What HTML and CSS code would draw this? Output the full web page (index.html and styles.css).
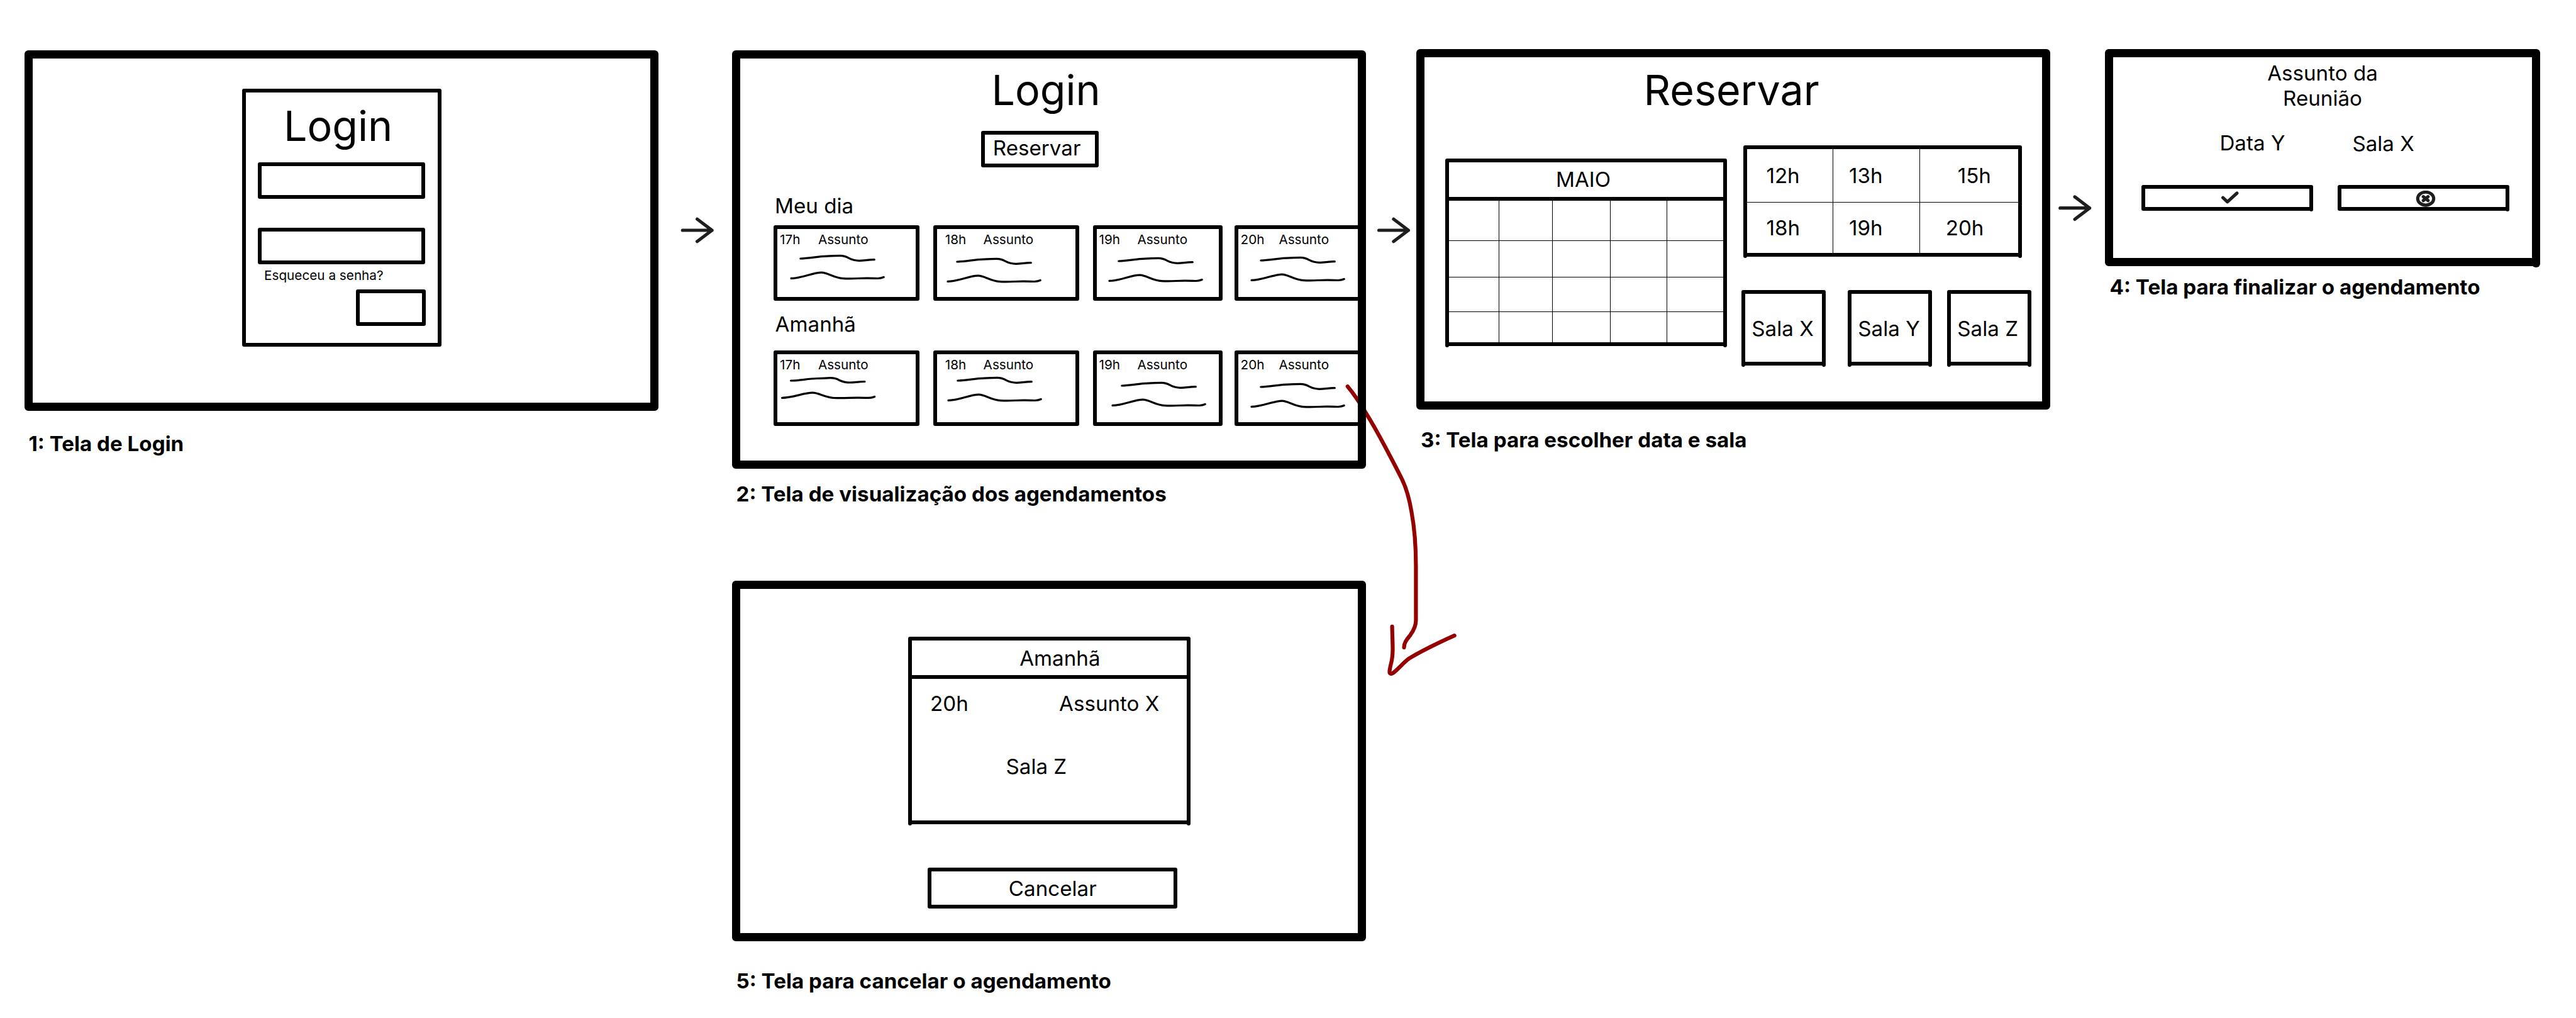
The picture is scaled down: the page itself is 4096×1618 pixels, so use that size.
FILE: index.html
```html
<!DOCTYPE html>
<html lang="pt-BR">
<head>
<meta charset="utf-8">
<title>Fluxo de agendamento de salas</title>
<link rel="stylesheet" href="styles.css">
</head>
<body>
<main class="board">
  <svg class="ink" width="4096" height="1618" viewBox="0 0 4096 1618">
    <defs>
      <g id="arrow"><path d="M0 0H46.8M23.3 -17.8L46.8 0L23.3 17.8"/></g>
    </defs>
    <g class="connector">
      <use href="#arrow" x="1085.3" y="366"/>
      <use href="#arrow" x="2192.6" y="366"/>
      <use href="#arrow" x="3275.8" y="330.7"/>
    </g>
    <g class="marker">
      <path d="M2142.8 614.2C2152 625 2162 640 2171.6 655.8C2183 674 2194 694 2204.4 713.7C2213 730 2221 745 2228.6 760.4C2236 775 2241 793 2244.5 813.9C2249.5 841 2251.4 870 2251.4 900V985.9C2251.4 995 2247 1003 2242.5 1009.3C2237 1016.5 2232.5 1021 2232.5 1029.1"/>
      <path d="M2213.6 995.8C2213.8 1010 2214.5 1021 2214.5 1031.7C2214.5 1040 2213.5 1049 2211.5 1056C2209.5 1065 2208 1070.9 2211.9 1070.9C2217 1070.9 2231 1053 2240.8 1046.4C2259 1035.5 2284 1023 2312.6 1010.1"/>
    </g>
    <defs>
      <path id="notes" d="M14.8 0C28 0 42 -3.5 57 -3.8C65 -3.8 71 -4.7 77.7 -4.7C85 -4.7 88 -3 91.5 -0.9C96 1.5 100 3.3 108.3 3.3C116 3.3 122 1.7 132.3 1.7M0 31.4C17 31.4 34 22.2 48.4 22.2C58 22.2 68 31.1 83 31.6C98 32.4 108 31.1 121 31.2C130 31.2 134 31.6 138 31.5C142 31.3 145 30.4 147.2 29.5"/>
      <path id="notes-tight" d="M13.5 0C27 0 41 -3.3 55.7 -3.5C64 -3.5 70 -4.3 76.4 -4.3C84 -4.3 87 -2.8 90.2 -0.8C95 1.4 99 3 107 3C115 3 121 1.5 131 1.5M-0.5 27.3C17 27.3 34 19.2 48 19.2C58 19.2 68 27 82.500 27.5C98 28.2 108 27 120.500 27.1C130 27.1 134 27.5 137.500 27.4C142 27.2 144.500 26.4 146.700 25.5"/>
    </defs>
  </svg>

  <section class="screen screen-login">
    <form class="box login-form">
      <h1 class="title">Login</h1>
      <div class="box field"></div>
      <div class="box field second"></div>
      <p class="small forgot">Esqueceu a senha?</p>
      <div class="box submit"></div>
    </form>
  </section>
  <p class="caption cap-1">1: Tela de Login</p>

  <section class="screen screen-agenda">
    <h1 class="title">Login</h1>
    <div class="box reserve">Reservar</div>
    <p class="day">Meu dia</p>
    <div class="cards">
      <article class="box card a1"><p class="small head"><span class="hour">17h</span>Assunto</p><svg class="scribble" viewBox="0 0 148 33"><use href="#notes"/></svg></article>
      <article class="box card a2"><p class="small head"><span class="hour">18h</span>Assunto</p><svg class="scribble" viewBox="0 0 148 33"><use href="#notes"/></svg></article>
      <article class="box card a3"><p class="small head"><span class="hour">19h</span>Assunto</p><svg class="scribble" viewBox="0 0 148 33"><use href="#notes"/></svg></article>
      <article class="box card a4"><p class="small head"><span class="hour">20h</span>Assunto</p><svg class="scribble" viewBox="0 0 148 33"><use href="#notes"/></svg></article>
    </div>
    <p class="day tomorrow">Amanhã</p>
    <div class="cards later">
      <article class="box card a1"><p class="small head"><span class="hour">17h</span>Assunto</p><svg class="scribble" viewBox="0 0 148 33"><use href="#notes-tight"/></svg></article>
      <article class="box card a2"><p class="small head"><span class="hour">18h</span>Assunto</p><svg class="scribble" viewBox="0 0 148 33"><use href="#notes"/></svg></article>
      <article class="box card a3"><p class="small head"><span class="hour">19h</span>Assunto</p><svg class="scribble" viewBox="0 0 148 33"><use href="#notes"/></svg></article>
      <article class="box card a4"><p class="small head"><span class="hour">20h</span>Assunto</p><svg class="scribble" viewBox="0 0 148 33"><use href="#notes"/></svg></article>
    </div>
  </section>
  <p class="caption cap-2">2: Tela de visualização dos agendamentos</p>

  <section class="screen screen-reserve">
    <h1 class="title">Reservar</h1>
    <div class="picker">
      <div class="box legs calendar">
        <p class="month">MAIO</p>
        <div class="days">
          <i></i><i></i><i></i><i></i><i></i>
          <i></i><i></i><i></i><i></i><i></i>
          <i></i><i></i><i></i><i></i><i></i>
          <i></i><i></i><i></i><i></i><i></i>
        </div>
      </div>
      <div class="choices">
        <div class="box legs times">
          <p>12h</p><p>13h</p><p class="t15">15h</p>
          <p>18h</p><p>19h</p><p class="t20">20h</p>
        </div>
        <div class="rooms">
          <div class="box legs room">Sala X</div>
          <div class="box legs room room-y">Sala Y</div>
          <div class="box legs room room-z">Sala Z</div>
        </div>
      </div>
    </div>
  </section>
  <p class="caption cap-3">3: Tela para escolher data e sala</p>

  <section class="screen leg screen-finish">
    <p class="subject">Assunto da<br>Reunião</p>
    <div class="summary"><p class="date">Data Y</p><p class="place">Sala X</p></div>
    <div class="actions">
      <div class="box leg action"><svg class="icon check" width="30" height="20" viewBox="0 0 30 20"><path d="M3.6 10.2L10.7 16.8L25.9 3"/></svg></div>
      <div class="box leg action"><svg class="icon cross" width="32" height="25.4" viewBox="-16 -12.7 32 25.4"><ellipse rx="12.7" ry="10.4"/><path d="M-3.8 -3.1L3.8 3.1M3.8 -3.1L-3.8 3.1"/></svg></div>
    </div>
  </section>
  <p class="caption cap-4">4: Tela para finalizar o agendamento</p>

  <section class="screen screen-cancel">
    <div class="box legs booking">
      <p class="booking-day">Amanhã</p>
      <div class="booking-row"><p class="when">20h</p><p>Assunto X</p></div>
      <p class="where">Sala Z</p>
    </div>
    <div class="box cancel">Cancelar</div>
  </section>
  <p class="caption cap-5">5: Tela para cancelar o agendamento</p>
</main>
</body>
</html>
```
FILE: styles.css
```css
* { box-sizing: border-box; margin: 0; padding: 0; }

body { background: #fff; }

.board {
  position: relative;
  width: 4096px;
  height: 1618px;
  overflow: hidden;
  color: #000;
  font: 400 33.17px/40px Inter, "Liberation Sans", sans-serif;
  white-space: nowrap;
}

/* hand-drawn layer, lies under the screen frames */
.ink { position: absolute; left: 0; top: 0; }
.connector, .marker { fill: none; stroke-linecap: round; stroke-linejoin: round; }
.connector { stroke: #1e1e1e; stroke-width: 5.2; }
.marker { stroke: #950000; stroke-width: 6.2; }

/* screens are windows on a free canvas */
.screen {
  position: absolute;
  display: flex;
  flex-direction: column;
  align-items: flex-start;
  border: 13px solid #000;
  border-radius: 6px;
}
.screen-login { left: 39px; top: 80px; width: 1008px; height: 573px; }
.screen-agenda { left: 1164px; top: 80px; width: 1008px; height: 665px; overflow: hidden; }
.screen-reserve { left: 2252px; top: 78px; width: 1008px; height: 573px; }
.screen-finish { left: 3347px; top: 78px; width: 692px; height: 345px; }
.screen-cancel { left: 1164px; top: 923px; width: 1008px; height: 573px; }

.caption { position: absolute; font-weight: 700; }
.cap-1 { left: 45.5px; top: 685px; }
.cap-2 { left: 1170.5px; top: 765px; }
.cap-3 { left: 2259px; top: 679px; }
.cap-4 { left: 3354.5px; top: 435.6px; }
.cap-5 { left: 1170.5px; top: 1539px; }

.title { font-size: 66.34px; line-height: 80px; font-weight: 400; }
.small { font-size: 20.73px; line-height: 24px; }

.box { position: relative; border: 6px solid #000; border-radius: 3px; }
/* side strokes that run slightly past the bottom one */
.legs::before, .legs::after, .leg::after {
  content: "";
  position: absolute;
  bottom: -8px;
  width: 6px;
  height: 6px;
  border-radius: 3px;
  background: #000;
}
.legs::before { left: -6px; }
.legs::after, .leg::after { right: -6px; }
.leg::after { bottom: -7px; }
.screen.leg::after { right: -13px; bottom: -15px; width: 13px; height: 13px; border-radius: 6px; }

/* 1: login */
.login-form {
  display: flex;
  flex-direction: column;
  align-self: center;
  width: 317px;
  height: 410px;
  margin-top: 48px;
}
.login-form .title { margin: 13px 0 0 60.5px; }
.field { width: 266px; height: 58px; margin: 18px 0 0 19px; }
.field.second { margin-top: 46px; }
.forgot { margin: 6.4px 0 0 29.5px; }
.submit { width: 111px; height: 58px; margin: 9.6px 19px 0 auto; }

/* 2: agenda */
.screen-agenda .title { margin: 9.8px 0 0 399.5px; }
.reserve { width: 187px; height: 58px; margin: 25.2px 0 0 383px; padding: 1px 0 0 12.8px; }
.day { margin: 40.6px 0 0 55px; }
.day.tomorrow { margin: 17px 0 0 55.6px; }
.cards { display: flex; margin: 11.4px 0 0 53px; }
.cards.later { margin-top: 22px; }
.card { flex: none; height: 120px; width: 232px; }
.head { display: flex; padding: 5.2px 0 0 4.1px; }
.hour { width: 60.8px; }
.a2 { margin-left: 21.5px; }
.a2 .head { padding-left: 13.3px; }
.a3 { margin-left: 22px; width: 206px; }
.a4 { margin-left: 19px; width: 240px; }
.scribble {
  display: block;
  width: 148px;
  height: 33px;
  overflow: visible;
  fill: none;
  stroke: #000;
  stroke-width: 3.2;
  stroke-linecap: round;
  stroke-linejoin: round;
}
.a1 .scribble { margin: 18.1px 0 0 21.9px; }
.a2 .scribble { margin: 22.7px 0 0 17.5px; }
.a3 .scribble { margin: 21.8px 0 0 20.9px; }
.a4 .scribble { margin: 20.4px 0 0 21px; }
.later .a1 .scribble { margin: 12.5px 0 0 7.5px; }
.later .a2 .scribble { margin: 13.2px 0 0 18.2px; }
.later .a3 .scribble { margin: 20.8px 0 0 25.9px; }
.later .a4 .scribble { margin: 22.7px 0 0 21.5px; }

/* 3: date and room */
.screen-reserve .title { margin: 11.6px 0 0 348.5px; }
.picker { display: flex; align-items: flex-start; margin: 48px 0 0 33px; }
.calendar { width: 448px; height: 298px; margin-top: 21px; }
.month { height: 61px; padding: 7.5px 0 0 170px; border-bottom: 6px solid #000; }
.days {
  display: grid;
  grid-template-columns: 80px 85px 92px 90px 1fr;
  grid-template-rows: 64px 58px 55px 1fr;
  height: 225px;
}
.days i { border: 0 solid #000; border-right-width: 1px; border-bottom-width: 1px; }
.days i:nth-child(5n) { border-right: 0; }
.days i:nth-child(n+16) { border-bottom: 0; }
.choices { margin-left: 23px; }
.times {
  display: grid;
  grid-template-columns: 137px 138px 1fr;
  grid-template-rows: 85px 1fr;
  width: 443px;
  height: 177px;
  margin-left: 3px;
}
.times p { padding: 22px 0 0 30.4px; border: 0 solid #000; border-right-width: 1px; border-bottom-width: 1px; }
.times p:nth-child(3n) { border-right: 0; }
.times p:nth-child(3n+2) { padding-left: 25px; }
.times p:nth-child(n+4) { padding-top: 20.6px; border-bottom: 0; }
.times .t15 { padding-left: 59.7px; }
.times .t20 { padding-left: 40.7px; }
.rooms { display: flex; margin-top: 53px; }
.room { width: 134px; height: 120px; padding: 35px 0 0 10.3px; }
.room-y { margin-left: 35px; }
.room-z { margin-left: 24px; }

/* 4: confirmation */
.subject { align-self: center; margin-top: 4.6px; text-align: center; line-height: 40.2px; }
.summary { display: flex; margin: 30.5px 0 0 169.4px; }
.date { width: 211px; }
.place { margin-top: 1px; }
.actions { display: flex; gap: 39px; margin: 46.4px 0 0 45px; }
.action { width: 273px; height: 41px; }
.icon { position: absolute; fill: none; stroke: #1e1e1e; stroke-width: 5.1; stroke-linecap: round; stroke-linejoin: round; }
.check { left: 120.2px; top: 3.7px; }
.cross { left: 117.5px; top: 3.3px; }

/* 5: cancel */
.booking { width: 449px; height: 298px; margin: 76px 0 0 267px; }
.booking-day { height: 61px; padding: 7.6px 0 0 171.2px; border-bottom: 6px solid #000; }
.booking-row { display: flex; margin: 18.6px 0 0 29px; }
.when { width: 205px; }
.where { margin: 60px 0 0 149.5px; }
.cancel { width: 397px; height: 65px; margin: 69px 0 0 298px; padding: 6.9px 0 0 122.8px; }
```
